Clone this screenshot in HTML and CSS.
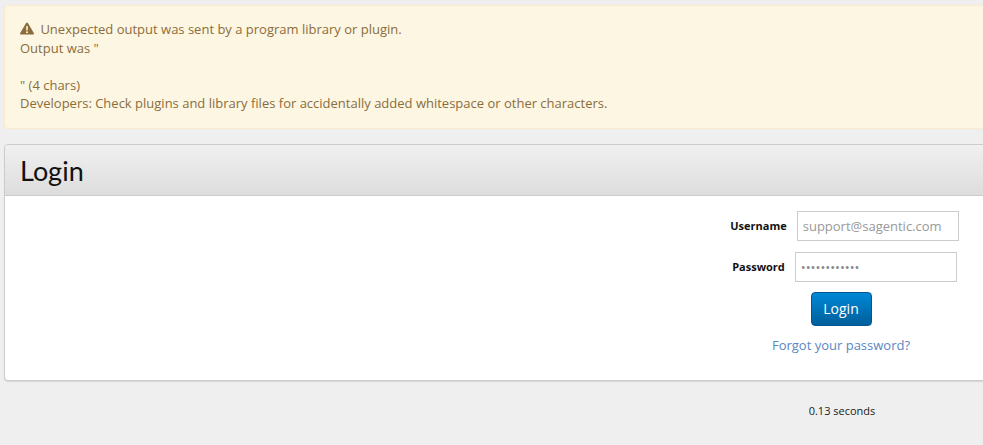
FILE: index.html
```html
<!DOCTYPE html>
<html lang="en">
<head>
  <meta charset="UTF-8" />
  <meta name="viewport" content="width=device-width, initial-scale=1.0"/>
  <title>Login</title>
  <link rel="stylesheet" href="styles.css">
</head>
<body>

  <div class="page">
    <div class="alert">
      <svg class="alert-icon" viewBox="0 0 14 13" width="14" height="13" aria-hidden="true">
        <path fill="#8a6d3b" fill-rule="evenodd" d="M7 .4c.4 0 .7.2.9.5l5.9 10.2c.4.7-.1 1.5-.9 1.5H1.1c-.8 0-1.3-.8-.9-1.5L6.1.9C6.3.6 6.6.4 7 .4zM6.1 4.2l.2 4.2h1.4l.2-4.2H6.1zM7 9.2a1 1 0 1 0 0 2 1 1 0 0 0 0-2z"/>
      </svg>
      <span class="alert-first">Unexpected output was sent by a program library or plugin.</span><br>
      Output was "<br>
      <br>
      " (4 chars)<br>
      Developers: Check plugins and library files for accidentally added whitespace or other characters.
    </div>

    <div class="panel">
      <div class="panel-head">
        <h1>Login</h1>
      </div>
      <div class="panel-body">
        <form class="login-form">
          <div class="form-row">
            <label for="username">Username</label>
            <input type="text" id="username" placeholder="support@sagentic.com" />
          </div>
          <div class="form-row">
            <label for="password">Password</label>
            <input type="password" id="password" value="abcdefghijkl" />
          </div>
          <button type="button">Login</button>
          <a class="forgot" href="#">Forgot your password?</a>
        </form>
      </div>
    </div>

    <div class="footer">
      <span class="timing">0.13 seconds</span>
    </div>
  </div>

</body>
</html>
```

FILE: styles.css
```css
html, body {
  overflow: hidden;
}

body {
  font-family: "Open Sans", Arial, sans-serif;
  font-size: 13px;
  line-height: 1.42857;
  background: #efefef;
  margin: 0;
  padding: 0;
}

.page {
  width: 1000px;
  padding: 5px 0 0 4px;
}

.alert {
  background: #fdf6e3;
  border: 1px solid #faebcc;
  border-radius: 4px;
  color: #8a6d3b;
  padding: 14px 15px 15px 15px;
  margin-bottom: 15px;
}

.alert-icon {
  vertical-align: -1px;
  margin-right: 0;
}

.alert-first {
  margin-left: 3px;
}

.panel {
  background: white;
  border: 1px solid #cccccc;
  border-radius: 4px;
  box-shadow: 0 1px 1px rgba(0,0,0,0.1);
}

.panel-head {
  height: 50px;
  padding: 0 15px;
  background: linear-gradient(to bottom, #f0f0f0, #dddddd);
  border-bottom: 1px solid #cccccc;
  border-radius: 3px 3px 0 0;
}

h1 {
  margin: 0;
  font-family: Lato, Arial, sans-serif;
  font-size: 27px;
  font-weight: 400;
  line-height: 52px;
  color: #111;
}

.panel-body {
  display: flex;
  justify-content: flex-end;
  height: 184px;
  padding-right: 12px;
}

.login-form {
  display: flex;
  flex-direction: column;
  align-items: center;
  width: 300px;
  padding-top: 15px;
}

.form-row {
  display: flex;
  justify-content: center;
  align-items: center;
  gap: 10px;
  margin-left: 7px;
  margin-bottom: 11px;
}

.form-row + button {
  margin-top: -1px;
}

label {
  padding-top: 1px;
  font-size: 11px;
  font-weight: bold;
  color: #111;
}

input {
  box-sizing: border-box;
  width: 162px;
  height: 30px;
  padding: 4px 5px;
  border: 1px solid #cccccc;
  font-family: "Open Sans", Arial, sans-serif;
  font-size: 13px;
  color: #888;
  background: white;
}

input::placeholder {
  color: #999;
}

button {
  width: 61px;
  height: 34px;
  border: 1px solid #04568c;
  border-radius: 4px;
  background: linear-gradient(to bottom, #0088d6, #005f9c);
  color: white;
  font-family: "Open Sans", Arial, sans-serif;
  font-size: 14px;
  cursor: pointer;
}

.forgot {
  margin-top: 10px;
  color: #5a86c4;
  text-decoration: none;
}

.footer {
  display: flex;
  justify-content: flex-end;
  padding: 22px 12px 0 0;
}

.timing {
  width: 300px;
  text-align: center;
  font-size: 11px;
  color: #222;
}
```
